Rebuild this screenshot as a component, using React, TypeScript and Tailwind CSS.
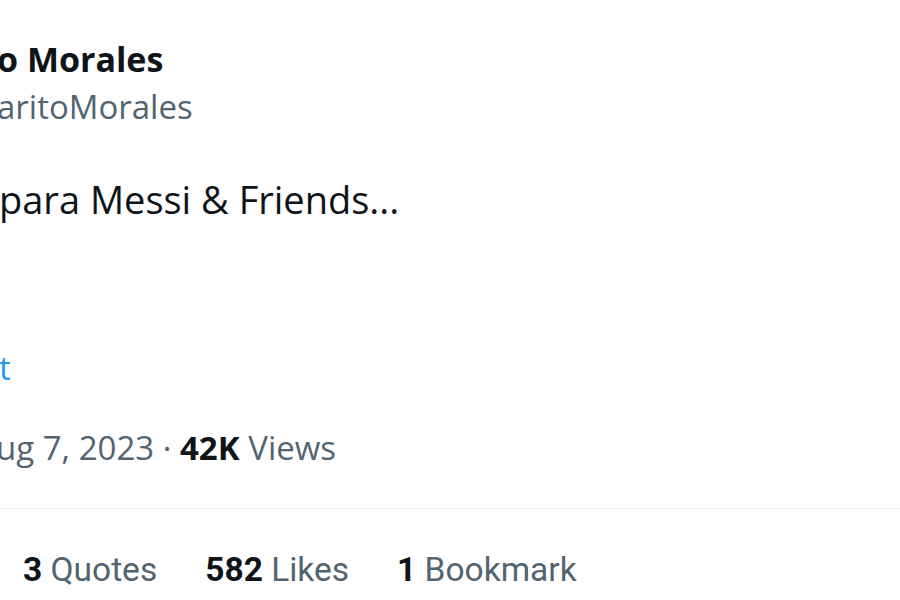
import React from "react";

export default function App() {
  const sans = { fontFamily: '"Open Sans", "Noto Sans", sans-serif' };
  return (
    <div className="w-[900px] h-[600px] bg-white overflow-hidden text-[#0f1419]" style={sans}>
      <div className="pt-[37px] flex flex-col">
        <div className="h-[44px] leading-[44px] whitespace-nowrap text-[34px] font-bold text-[#0f1419] -ml-[3px]">o Morales</div>
        <div className="mt-[4px] h-[44px] leading-[44px] whitespace-nowrap text-[33px] text-[#536471] -ml-[3px]">aritoMorales</div>
        <div className="mt-[46px] h-[48px] leading-[48px] whitespace-nowrap text-[38px] text-[#0f1419] -ml-[1px]">para Messi &amp; Friends...</div>
        <div className="mt-[123px] h-[44px] leading-[44px] whitespace-nowrap text-[33px] text-[#1d9bf0] -ml-[1px]">t</div>
        <div className="mt-[36px] h-[44px] leading-[44px] whitespace-nowrap text-[33px] text-[#536471] -ml-[4px]">
          ug 7, 2023 · <span className="font-bold text-[#0f1419]">42K</span> Views
        </div>
        <div className="mt-[38px] h-px bg-[#eff3f4]" />
        <div className="mt-[39px] h-[44px] leading-[44px] whitespace-nowrap text-[33.5px] text-[#536471] flex gap-[48px] pl-[23px]" style={{ fontFamily: 'Roboto, sans-serif' }}>
          <span><span className="font-bold text-[#0f1419]">3</span> Quotes</span>
          <span><span className="font-bold text-[#0f1419]">582</span> Likes</span>
          <span><span className="font-bold text-[#0f1419]">1</span> Bookmark</span>
        </div>
      </div>
    </div>
  );
}
